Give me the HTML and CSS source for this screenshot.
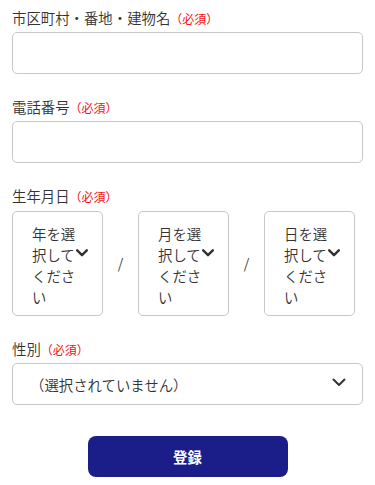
FILE: index.html
```html
<!DOCTYPE html>
<html lang="ja">
<head>
<meta charset="utf-8">
<title>フォーム</title>
<link rel="stylesheet" href="styles.css">
</head>
<body>
<form class="form">
  <div class="field">
    <label class="label">市区町村・番地・建物名<span class="req">（必須）</span></label>
    <input class="input" type="text">
  </div>
  <div class="field">
    <label class="label">電話番号<span class="req">（必須）</span></label>
    <input class="input" type="tel">
  </div>
  <div class="field">
    <div class="label">生年月日<span class="req">（必須）</span></div>
    <div class="date-row">
      <div class="date-box">
        <span class="date-text">年を選択してください</span>
        <svg class="chev-sm" viewBox="0 0 12 8" width="12" height="8"><path d="M1.2 1.3 L6 6.2 L10.8 1.3" fill="none" stroke="#333" stroke-width="2.4" stroke-linecap="round" stroke-linejoin="round"/></svg>
      </div>
      <span class="slash">/</span>
      <div class="date-box">
        <span class="date-text">月を選択してください</span>
        <svg class="chev-sm" viewBox="0 0 12 8" width="12" height="8"><path d="M1.2 1.3 L6 6.2 L10.8 1.3" fill="none" stroke="#333" stroke-width="2.4" stroke-linecap="round" stroke-linejoin="round"/></svg>
      </div>
      <span class="slash">/</span>
      <div class="date-box">
        <span class="date-text">日を選択してください</span>
        <svg class="chev-sm" viewBox="0 0 12 8" width="12" height="8"><path d="M1.2 1.3 L6 6.2 L10.8 1.3" fill="none" stroke="#333" stroke-width="2.4" stroke-linecap="round" stroke-linejoin="round"/></svg>
      </div>
    </div>
  </div>
  <div class="field">
    <div class="label">性別<span class="req">（必須）</span></div>
    <div class="select">
      <span class="select-text">（選択されていません）</span>
      <svg class="chev" viewBox="0 0 14 9" width="14" height="9"><path d="M1.5 1.5 L7 7 L12.5 1.5" fill="none" stroke="#333" stroke-width="2" stroke-linecap="round" stroke-linejoin="round"/></svg>
    </div>
  </div>
  <div class="actions">
    <button class="submit" type="button">登録</button>
  </div>
</form>
</body>
</html>
```
FILE: styles.css
```css
html, body {
  margin: 0;
  padding: 0;
  background: #fff;
}

body {
  font-family: "Noto Sans CJK JP", "Noto Sans", sans-serif;
  font-weight: 350;
  color: #333;
  font-size: 14px;
  text-spacing-trim: space-all;
}

.form {
  padding: 7px 12px 0;
  display: flex;
  flex-direction: column;
  gap: 22px;
}

.field {
  display: flex;
  flex-direction: column;
  gap: 4px;
}

.label {
  display: block;
  font-size: 14.4px;
  line-height: 21px;
  height: 21px;
  color: #333;
}

.req {
  font-size: 12px;
  font-weight: 400;
  line-height: 1;
  color: #f51010;
}

.input {
  box-sizing: border-box;
  height: 42px;
  width: 100%;
  margin: 0;
  border: 1px solid #c8c8c8;
  border-radius: 5px;
  background: #fff;
  font: inherit;
  padding: 0 12px;
}

.date-row {
  display: flex;
  align-items: center;
  margin-top: 1px;
}

.date-box {
  position: relative;
  box-sizing: border-box;
  width: 91px;
  height: 105px;
  border: 1px solid #c8c8c8;
  border-radius: 5px;
  padding: 11px 0 0 19px;
}

.date-text {
  display: block;
  width: 3em;
  font-size: 14.4px;
  line-height: 21px;
  color: #333;
}

.chev-sm {
  position: absolute;
  right: 14px;
  top: 37px;
  display: block;
}

.slash {
  width: 35px;
  text-align: center;
  font-size: 14px;
  color: #333;
  line-height: 21px;
}

.select {
  position: relative;
  box-sizing: border-box;
  height: 42px;
  border: 1px solid #c8c8c8;
  border-radius: 5px;
  display: flex;
  align-items: center;
  padding: 0 17px;
}

.select-text {
  font-size: 14.4px;
  color: #333;
}

.chev {
  position: absolute;
  right: 16px;
  top: 14px;
  display: block;
}

.actions {
  display: flex;
  justify-content: center;
  padding-top: 9px;
}

.submit {
  width: 200px;
  height: 41px;
  border: 0;
  border-radius: 8px;
  background: #1b1d88;
  color: #fff;
  font-family: inherit;
  font-size: 14.4px;
  font-weight: 700;
  cursor: pointer;
}
```
